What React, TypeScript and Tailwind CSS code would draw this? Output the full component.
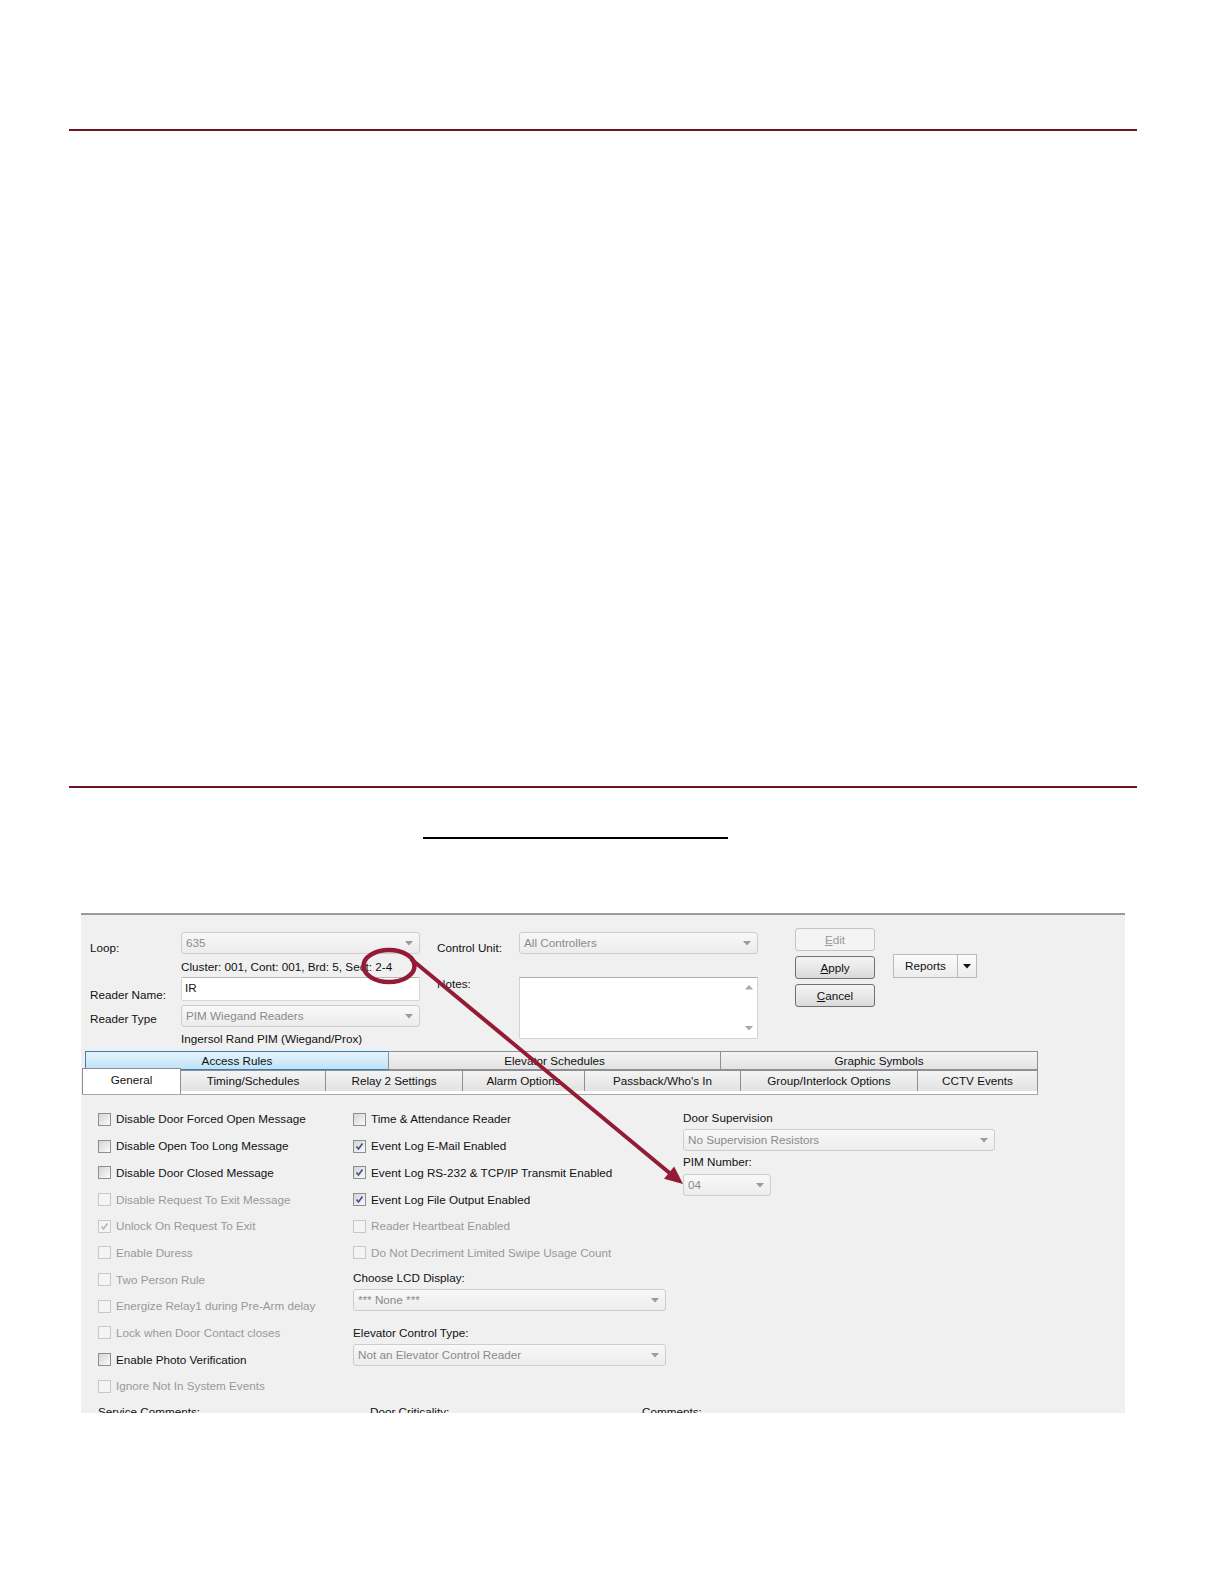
import React from "react";

const FONT = { fontFamily: '"Liberation Sans", Arial, sans-serif' };

function Arrow() {
  return (
    <svg width="8" height="5" viewBox="0 0 8 5">
      <path d="M0 0H8L4 4.5Z" fill="#9b9b9b" />
    </svg>
  );
}

function Dropdown({ w, text, h = 22 }: { w: string; text: string; h?: number }) {
  return (
    <div
      className={`${w} flex items-center justify-between pl-[4px] pr-[6px] border border-[#cdcdcd] rounded-[3px] bg-linear-to-b from-[#f8f8f8] to-[#ececec] text-[#8a8a8a]`}
      style={{ height: h }}
    >
      <span className="leading-none">{text}</span>
      <Arrow />
    </div>
  );
}

function Check({ disabled, checked }: { disabled?: boolean; checked?: boolean }) {
  return (
    <div
      className={`w-[13px] h-[13px] shrink-0 border flex items-center justify-center ${
        disabled
          ? "border-[#c8c8c8] bg-[#f4f4f4]"
          : "border-[#8f8f8f] bg-linear-to-br from-[#d4d4d4] to-[#fbfbfb]"
      }`}
    >
      {checked && (
        <svg width="9" height="9" viewBox="0 0 9 9">
          <path
            d="M1.5 4.5L3.5 7L7.5 1.5"
            fill="none"
            stroke={disabled ? "#b4b4b4" : "#3d4f8e"}
            strokeWidth="1.6"
          />
        </svg>
      )}
    </div>
  );
}

function CbRow({ label, disabled, checked }: { label: string; disabled?: boolean; checked?: boolean }) {
  return (
    <div className="h-[26.7px] flex items-center gap-[5px]">
      <Check disabled={disabled} checked={checked} />
      <span className={`leading-none whitespace-nowrap ${disabled ? "text-[#999999]" : "text-[#111]"}`}>{label}</span>
    </div>
  );
}

function Btn({ children, disabled }: { children: React.ReactNode; disabled?: boolean }) {
  return (
    <div
      className={`w-[80px] h-[23px] flex items-center justify-center rounded-[3px] border ${
        disabled
          ? "border-[#c2c5c8] bg-[#f4f4f4] text-[#9a9a9a]"
          : "border-[#707070] bg-linear-to-b from-[#f3f3f3] via-[#e9e9e9] to-[#d9d9d9] text-[#111]"
      }`}
    >
      {children}
    </div>
  );
}

const col1 = [
  { l: "Disable Door Forced Open Message" },
  { l: "Disable Open Too Long Message" },
  { l: "Disable Door Closed Message" },
  { l: "Disable Request To Exit Message", d: true },
  { l: "Unlock On Request To Exit", d: true, c: true },
  { l: "Enable Duress", d: true },
  { l: "Two Person Rule", d: true },
  { l: "Energize Relay1 during Pre-Arm delay", d: true },
  { l: "Lock when Door Contact closes", d: true },
  { l: "Enable Photo Verification" },
  { l: "Ignore Not In System Events", d: true },
];

const col2 = [
  { l: "Time & Attendance Reader" },
  { l: "Event Log E-Mail Enabled", c: true },
  { l: "Event Log RS-232 & TCP/IP Transmit Enabled", c: true },
  { l: "Event Log File Output Enabled", c: true },
  { l: "Reader Heartbeat Enabled", d: true },
  { l: "Do Not Decriment Limited Swipe Usage Count", d: true },
];

const tabs2 = [
  { t: "Timing/Schedules", w: "w-[146px]" },
  { t: "Relay 2 Settings", w: "w-[138px]" },
  { t: "Alarm Options", w: "w-[123px]" },
  { t: "Passback/Who's In", w: "w-[157px]" },
  { t: "Group/Interlock Options", w: "w-[178px]" },
  { t: "CCTV Events", w: "w-[121px]" },
];

const tabGray =
  "border border-[#8c8f96] bg-linear-to-b from-[#f4f4f4] to-[#e2e2e2] flex items-center justify-center leading-none text-[#111] -ml-px";

export default function App() {
  return (
    <div className="w-[1224px] h-[1584px] bg-white flex flex-col" style={FONT}>
      <div className="h-[129px] shrink-0" />
      <div className="ml-[69px] w-[1068px] h-[1.5px] bg-[#6e1422]" />
      <div className="h-[655.5px] shrink-0" />
      <div className="ml-[69px] w-[1068px] h-[1.5px] bg-[#6e1422]" />
      <div className="h-[49.5px] shrink-0" />
      <div className="ml-[423px] w-[305px] h-[2px] bg-black" />
      <div className="h-[74px] shrink-0" />

      {/* Dialog screenshot */}
      <div className="relative ml-[81px] w-[1044px] h-[500px] overflow-hidden bg-[#f0f0f0] border-t-2 border-[#9a9a9a] text-[11.7px] text-[#111]">
        {/* top section */}
        <div className="h-[136px] flex">
          {/* left stack */}
          <div className="ml-[9px] pt-[17px] flex flex-col">
            <div className="flex">
              <div className="w-[91px] pt-[9px] leading-[14px]">Loop:</div>
              <Dropdown w="w-[239px]" text="635" h={22} />
            </div>
            <div className="ml-[91px] mt-[5px] leading-[14px]">Cluster: 001, Cont: 001, Brd: 5, Sect: 2-4</div>
            <div className="flex mt-[3px]">
              <div className="w-[91px] pt-[11px] leading-[14px]">Reader Name:</div>
              <div className="w-[239px] h-[24px] bg-white border border-[#d6d6d6] border-t-[#b5b5b5] rounded-[2px] px-[3px] pt-[3px] leading-[14px]">IR</div>
            </div>
            <div className="flex mt-[3px]">
              <div className="w-[91px] pt-[7px] leading-[14px]">Reader Type</div>
              <Dropdown w="w-[239px]" text="PIM Wiegand Readers" h={22} />
            </div>
            <div className="ml-[91px] mt-[5px] leading-[14px]">Ingersol Rand PIM (Wiegand/Prox)</div>
          </div>

          {/* middle stack */}
          <div className="ml-[17px] pt-[17px] flex flex-col">
            <div className="flex">
              <div className="w-[82px] pt-[9px] leading-[14px]">Control Unit:</div>
              <Dropdown w="w-[239px]" text="All Controllers" h={22} />
            </div>
            <div className="flex mt-[22px]">
              <div className="w-[82px] leading-[14px]">Notes:</div>
              <div className="w-[239px] h-[62px] bg-white border border-[#d3d3d3] border-t-[#b0b0b0] flex justify-end">
                <div className="w-[17px] flex flex-col items-center justify-between py-[7px]">
                  <svg width="8" height="5" viewBox="0 0 8 5"><path d="M0 4.5H8L4 0Z" fill="#a8a8a8" /></svg>
                  <svg width="8" height="5" viewBox="0 0 8 5"><path d="M0 0H8L4 4.5Z" fill="#a8a8a8" /></svg>
                </div>
              </div>
            </div>
          </div>

          {/* buttons */}
          <div className="ml-[37px] pt-[13px] flex flex-col">
            <Btn disabled><span><span className="underline">E</span>dit</span></Btn>
            <div className="mt-[5px]">
              <Btn><span><span className="underline">A</span>pply</span></Btn>
            </div>
            <div className="mt-[5px]">
              <Btn><span><span className="underline">C</span>ancel</span></Btn>
            </div>
          </div>

          {/* reports */}
          <div className="ml-[18px] pt-[39px]">
            <div className="flex h-[24px] border border-[#b9b9b9] bg-linear-to-b from-[#fbfbfb] to-[#ececec]">
              <div className="w-[63px] flex items-center justify-center text-[#111]">Reports</div>
              <div className="w-[19px] border-l border-[#b9b9b9] flex items-center justify-center">
                <svg width="8" height="5" viewBox="0 0 8 5"><path d="M0 0H8L4 4.5Z" fill="#111" /></svg>
              </div>
            </div>
          </div>
        </div>

        {/* tabs */}
        <div className="ml-[1px] flex flex-col">
          <div className="ml-[3px] flex h-[19px]">
            <div className="w-[304px] border border-[#3c7fb1] bg-linear-to-b from-[#e6f4fc] to-[#bfe2f7] flex items-center justify-center leading-none">Access Rules</div>
            <div className={`w-[333px] ${tabGray}`}>Elevator Schedules</div>
            <div className={`w-[318px] ${tabGray}`}>Graphic Symbols</div>
          </div>
          <div className="flex h-[21px] items-start">
            <div className="relative z-10 w-[99px] h-[26px] -mt-[2px] bg-white border border-[#8c8f96] border-b-0 flex items-start justify-center pt-[5px] leading-none">General</div>
            {tabs2.map((t) => (
              <div key={t.t} className={`${t.w} h-[22px] ${tabGray}`}>{t.t}</div>
            ))}
          </div>
          <div className="w-[956px] h-[4px] bg-white border-b border-l border-r border-[#a8a8a8]" />
        </div>

        {/* panel body */}
        <div className="pt-[11px] ml-[1px] flex flex-col">
          <div className="h-[293.7px] flex">
            <div className="ml-[16px] w-[255px] flex flex-col">
              {col1.map((r) => (
                <CbRow key={r.l} label={r.l} disabled={r.d} checked={r.c} />
              ))}
            </div>
            <div className="w-[330px] flex flex-col">
              {col2.map((r) => (
                <CbRow key={r.l} label={r.l} disabled={r.d} checked={r.c} />
              ))}
              <div className="mt-[5px] leading-[14px]">Choose LCD Display:</div>
              <div className="mt-[4px]">
                <Dropdown w="w-[313px]" text="*** None ***" h={22} />
              </div>
              <div className="mt-[15px] leading-[14px]">Elevator Control Type:</div>
              <div className="mt-[4px]">
                <Dropdown w="w-[313px]" text="Not an Elevator Control Reader" h={22} />
              </div>
            </div>
            <div className="flex flex-col">
              <div className="mt-[5px] leading-[14px]">Door Supervision</div>
              <div className="mt-[4px]">
                <Dropdown w="w-[312px]" text="No Supervision Resistors" h={22} />
              </div>
              <div className="mt-[4px] leading-[14px]">PIM Number:</div>
              <div className="mt-[5px]">
                <Dropdown w="w-[88px]" text="04" h={22} />
              </div>
            </div>
          </div>
          <div className="mt-[5px] flex leading-[14px]">
            <div className="ml-[16px] w-[272px]">Service Comments:</div>
            <div className="w-[272px]">Door Criticality:</div>
            <div>Comments:</div>
          </div>
        </div>

        {/* red annotation */}
        <svg className="absolute left-0 top-0 pointer-events-none" width="1044" height="500" viewBox="0 0 1044 500">
          <ellipse cx="308" cy="51" rx="25.5" ry="16" fill="none" stroke="#931b35" strokeWidth="4.5" />
          <line x1="330" y1="44" x2="591" y2="260" stroke="#931b35" strokeWidth="4" />
          <path d="M602 269L583 263.8L593.2 251.4Z" fill="#931b35" />
        </svg>
      </div>
    </div>
  );
}
